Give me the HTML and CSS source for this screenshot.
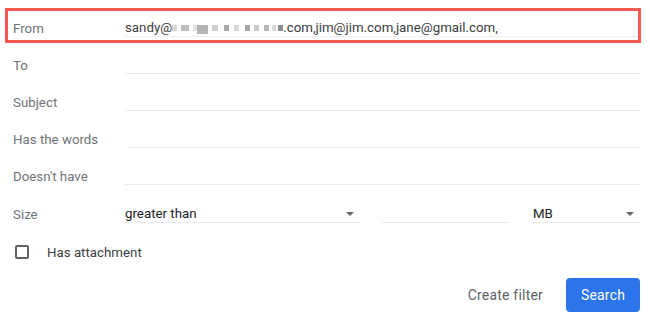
FILE: index.html
```html
<!DOCTYPE html>
<html lang="en">
<head>
    <meta charset="UTF-8">
    <meta name="viewport" content="width=device-width, initial-scale=1.0">
    <title>Search filter</title>
    <link rel="stylesheet" href="styles.css">
</head>
<body>
    <form class="filter-form">
        <div class="row row-from">
            <label class="label">From</label>
            <div class="field">
                <span class="value">sandy@</span><span class="redacted">
                    <i class="px p1"></i><i class="px p2"></i><i class="px p3"></i><i class="px p4"></i><i class="px p5"></i><i class="px p6"></i><i class="px p7"></i><i class="px p8"></i><i class="px p9"></i><i class="px p10"></i><i class="px p11"></i><i class="px p12"></i>
                </span><span class="value">.com,jim@jim.com,jane@gmail.com,</span>
            </div>
        </div>
        <div class="row">
            <label class="label">To</label>
            <div class="field"></div>
        </div>
        <div class="row">
            <label class="label">Subject</label>
            <div class="field"></div>
        </div>
        <div class="row">
            <label class="label">Has the words</label>
            <div class="field field-shift"></div>
        </div>
        <div class="row">
            <label class="label">Doesn't have</label>
            <div class="field"></div>
        </div>
        <div class="row">
            <label class="label">Size</label>
            <div class="size-group">
                <div class="field select size-op"><span class="value">greater than</span><span class="arrow"></span></div>
                <div class="field size-num"></div>
                <div class="field select size-unit"><span class="value">MB</span><span class="arrow"></span></div>
            </div>
        </div>
        <div class="row row-check">
            <span class="checkbox"></span>
            <span class="check-label">Has attachment</span>
        </div>
        <div class="actions">
            <button type="button" class="btn-text">Create filter</button>
            <button type="button" class="btn-primary">Search</button>
        </div>
    </form>
</body>
</html>
```

FILE: styles.css
```css
body {
    margin: 0;
    background-color: #fff;
    font-family: Roboto, 'Liberation Sans', sans-serif;
    font-size: 13.3px;
    color: #202124;
}
.filter-form {
    width: 627px;
    padding: 9.5px 0 0 13px;
}
.row {
    display: flex;
    align-items: center;
    height: 37.2px;
}
.row-from {
    position: relative;
}
.row-from::after {
    content: '';
    position: absolute;
    top: -1.5px;
    left: -8px;
    right: -1px;
    height: 29px;
    border: 3px solid #f25a4f;
}
.label {
    width: 112px;
    flex: none;
    color: #6f7377;
}
.field {
    flex: 1;
    display: flex;
    align-items: center;
    height: 16px;
    border-bottom: 1px solid #e8eaed;
    color: #3c4043;
    white-space: nowrap;
}
.field-shift {
    margin-left: 4px;
}
.row-from .field {
    border-bottom-color: #eceef0;
}
.redacted {
    display: inline-flex;
    align-items: center;
    width: 111px;
    height: 10px;
}
.px {
    display: inline-block;
    height: 6px;
    background-color: #c4c4c4;
}
.p1 { width: 6px; background-color: #d9d9d9; }
.p2 { width: 10px; margin-left: 4px; background-color: #bdbdbd; }
.p3 { width: 5px; margin-left: 4px; background-color: #e2e2e2; }
.p4 { width: 14px; height: 9px; margin-top: 4px; background-color: #b4b4b4; }
.p5 { width: 8px; margin-left: 4px; background-color: #cfcfcf; }
.p6 { width: 6px; margin-left: 6px; background-color: #a9a9a9; }
.p7 { width: 6px; margin-left: 5px; background-color: #d6d6d6; }
.p8 { width: 7px; margin-left: 6px; background-color: #a4a4a4; }
.p9 { width: 6px; margin-left: 4px; background-color: #cccccc; }
.p10 { width: 6px; margin-left: 5px; background-color: #b7b7b7; }
.p11 { width: 5px; margin-left: 3px; background-color: #dadada; }
.p12 { width: 7px; margin-left: 2px; background-color: #8f8f8f; }
.size-group {
    flex: 1;
    display: flex;
}
.size-op {
    flex: none;
    width: 235px;
}
.size-num {
    flex: none;
    width: 128px;
    margin-left: 22px;
}
.size-unit {
    flex: none;
    width: 107px;
    margin-left: 23px;
}
.select {
    justify-content: space-between;
    color: #202124;
}
.arrow {
    width: 0;
    height: 0;
    margin-right: 6px;
    border-left: 4px solid transparent;
    border-right: 4px solid transparent;
    border-top: 4px solid #5f6368;
}
.row-check {
    height: 39px;
}
.checkbox {
    width: 10px;
    height: 10px;
    margin-left: 2px;
    border: 2px solid #5f6368;
    border-radius: 2px;
}
.check-label {
    margin-left: 18px;
    color: #3c4043;
}
.actions {
    display: flex;
    justify-content: flex-end;
    align-items: center;
    margin-top: 6px;
}
.btn-text {
    border: none;
    background: none;
    font-family: inherit;
    font-size: 14px;
    color: #5f6368;
    padding: 0;
    margin-right: 23px;
    letter-spacing: 0.2px;
}
.btn-primary {
    width: 74px;
    height: 34px;
    border: none;
    border-radius: 4px;
    background-color: #2b74e9;
    color: #fff;
    font-family: inherit;
    font-size: 14px;
    letter-spacing: 0.2px;
}
```
